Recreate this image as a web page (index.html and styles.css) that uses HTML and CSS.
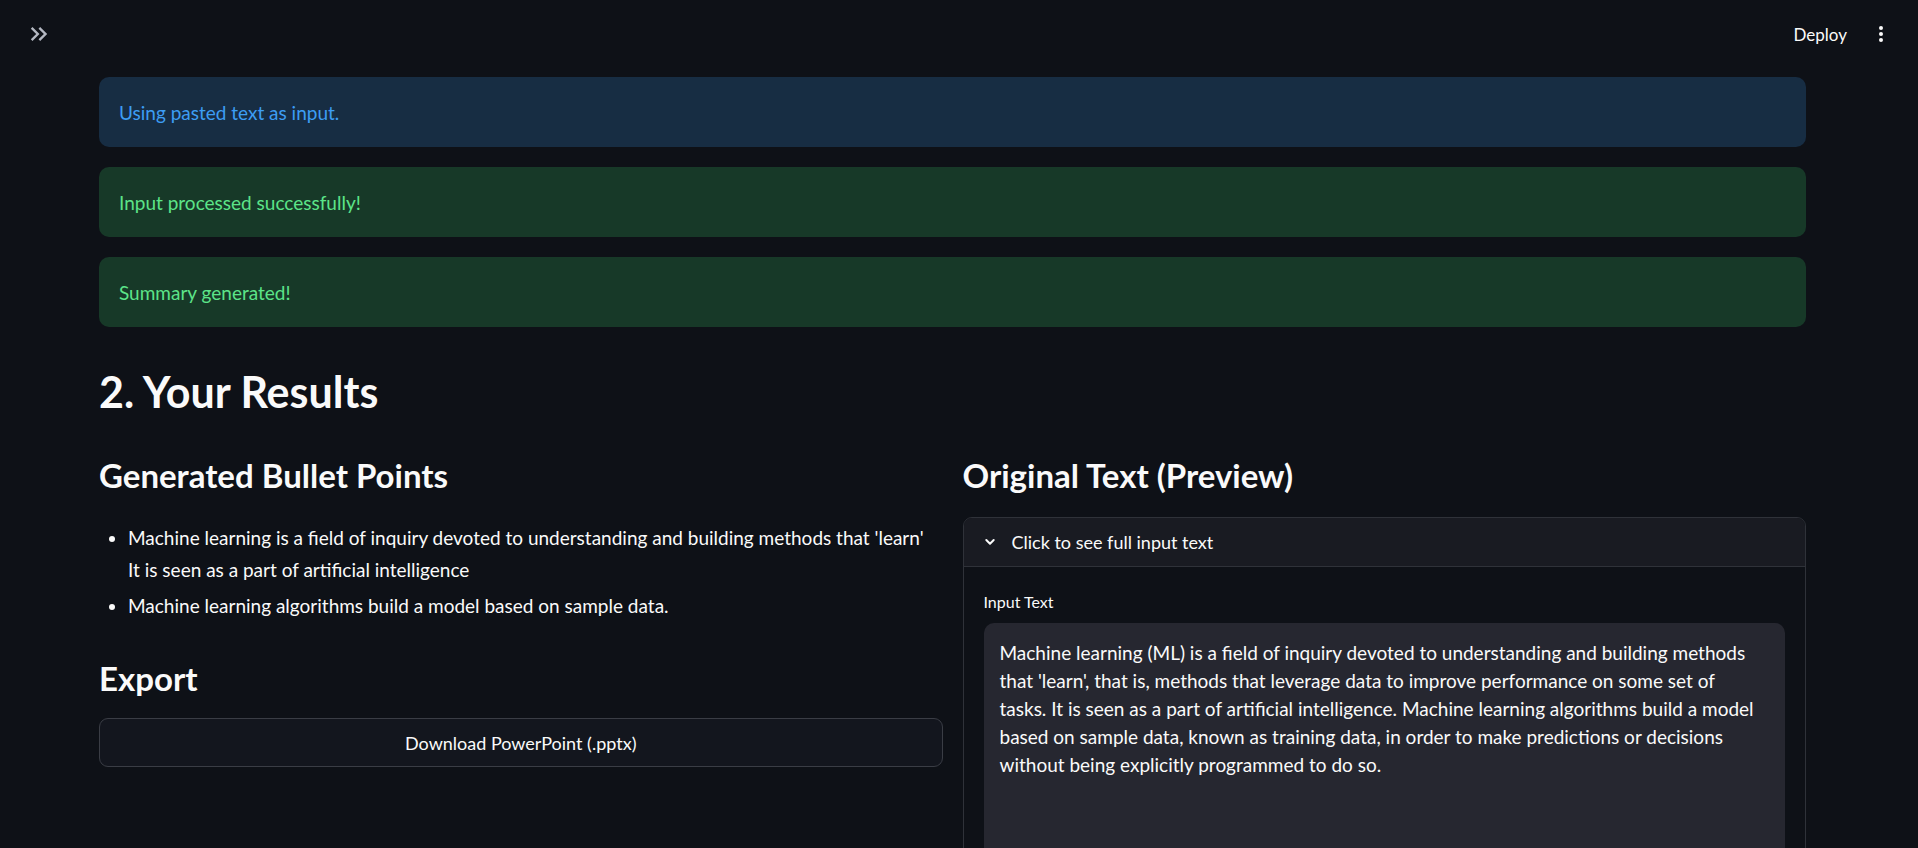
FILE: index.html
```html
<!DOCTYPE html>
<html lang="en">
<head>
<meta charset="utf-8">
<title>Results</title>
<link rel="stylesheet" href="styles.css">
</head>
<body>
<header class="topbar">
  <button class="sidebar-toggle" aria-label="Open sidebar">
    <svg viewBox="0 0 24 24" width="28" height="28"><path fill="currentColor" d="M6.41 6L5 7.41 9.58 12 5 16.59 6.41 18l6-6z M13 6l-1.41 1.41L16.17 12l-4.58 4.59L13 18l6-6z"/></svg>
  </button>
  <div class="toolbar">
    <span class="deploy">Deploy</span>
    <svg class="more" viewBox="0 0 24 24" width="24" height="24"><circle cx="12" cy="6" r="2" fill="currentColor"/><circle cx="12" cy="12" r="2" fill="currentColor"/><circle cx="12" cy="18" r="2" fill="currentColor"/></svg>
  </div>
</header>
<main class="main">
  <div class="alert info">Using pasted text as input.</div>
  <div class="alert success">Input processed successfully!</div>
  <div class="alert success">Summary generated!</div>
  <h2 class="title">2. Your Results</h2>
  <div class="columns">
    <section class="col">
      <h3 class="subtitle">Generated Bullet Points</h3>
      <ul class="bullets">
        <li>Machine learning is a field of inquiry devoted to understanding and building methods that 'learn'<br>It is seen as a part of artificial intelligence</li>
        <li>Machine learning algorithms build a model based on sample data.</li>
      </ul>
      <h3 class="subtitle export">Export</h3>
      <button class="download">Download PowerPoint (.pptx)</button>
    </section>
    <section class="col">
      <h3 class="subtitle">Original Text (Preview)</h3>
      <div class="expander">
        <div class="exp-head">
          <svg class="chev" viewBox="0 0 12 12" width="12" height="12"><path d="M2.3 4 6 7.7 9.7 4" fill="none" stroke="currentColor" stroke-width="2" stroke-linecap="round" stroke-linejoin="round"/></svg>
          <span>Click to see full input text</span>
        </div>
        <div class="exp-body">
          <div class="label">Input Text</div>
          <div class="textarea">Machine learning (ML) is a field of inquiry devoted to understanding and building methods<br>that 'learn', that is, methods that leverage data to improve performance on some set of<br>tasks. It is seen as a part of artificial intelligence. Machine learning algorithms build a model<br>based on sample data, known as training data, in order to make predictions or decisions<br>without being explicitly programmed to do so.</div>
        </div>
      </div>
    </section>
  </div>
</main>
</body>
</html>
```
FILE: styles.css
```css
* { box-sizing: border-box; }
html, body {
  margin: 0;
  padding: 0;
  height: 848px;
  overflow: hidden;
  background: #0e1117;
  color: #fafafa;
  font-family: Lato, "Open Sans", sans-serif;
}
.topbar {
  height: 68px;
  display: flex;
  align-items: center;
  justify-content: space-between;
  padding: 0 25px 0 25px;
}
.sidebar-toggle {
  background: none;
  border: 0;
  padding: 0;
  margin: 0;
  color: #b4b8c2;
  display: flex;
}
.toolbar {
  display: flex;
  align-items: center;
  gap: 22px;
}
.deploy {
  font-size: 17px;
  color: #fafafa;
}
.more { color: #fafafa; display: block; }
.main {
  width: 1707px;
  margin-left: 99px;
  padding-top: 9px;
}
.alert {
  height: 70px;
  border-radius: 10px;
  padding: 0 20px;
  display: flex;
  align-items: center;
  font-size: 19px;
  margin-bottom: 20px;
}
.alert.info { background: #172d43; color: #3d9df3; }
.alert.success { background: #173928; color: #5ce488; }
.title {
  margin: 38px 0 0;
  font-size: 43px;
  line-height: 54px;
  font-weight: 700;
}
.columns {
  display: flex;
  gap: 20px;
  margin-top: 35px;
}
.col { flex: 1 1 0; min-width: 0; }
.subtitle {
  margin: 0;
  font-size: 33px;
  line-height: 42px;
  font-weight: 700;
}
.bullets {
  margin: 26px 0 0;
  padding-left: 29px;
  font-size: 19px;
  line-height: 32px;
}
.bullets li { margin-bottom: 4px; }
.bullets li::marker { font-size: 18px; }
.export { margin-top: 35px; }
.download {
  margin-top: 19px;
  width: 100%;
  height: 49px;
  background: #13161e;
  border: 1px solid #3a3d45;
  border-radius: 9px;
  color: #fafafa;
  font-family: inherit;
  font-size: 18px;
}
.expander {
  margin-top: 21px;
  border: 1px solid #2f3239;
  border-radius: 9px;
  height: 400px;
  overflow: hidden;
}
.exp-head {
  height: 49px;
  background: #191b22;
  border-bottom: 1px solid #2f3239;
  display: flex;
  align-items: center;
  padding: 0 20px;
  gap: 16px;
  font-size: 18px;
}
.chev { color: #fafafa; display: block; }
.exp-body {
  padding: 23px 20px 0;
}
.label {
  font-size: 16px;
  line-height: 24px;
  margin-bottom: 9px;
}
.textarea {
  background: #262730;
  border-radius: 10px;
  padding: 16px 16px;
  height: 400px;
  font-size: 19px;
  line-height: 28px;
  white-space: nowrap;
}
```
